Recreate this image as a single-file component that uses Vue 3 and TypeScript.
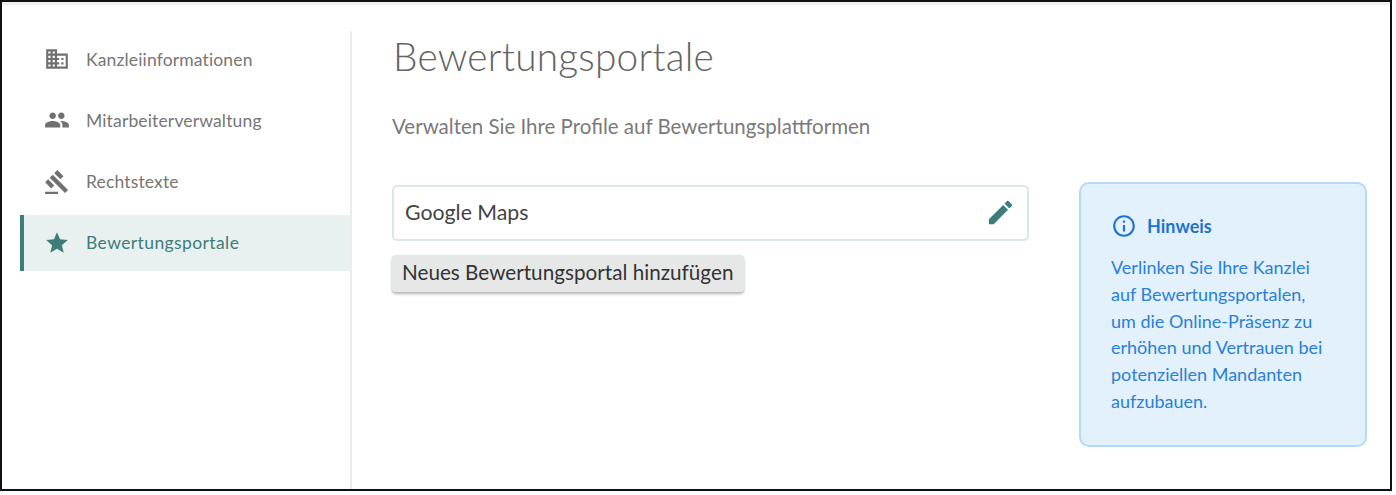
<script setup lang="ts">
interface NavItem {
  label: string
  path: string
  active?: boolean
}

const items: NavItem[] = [
  {
    label: 'Kanzleiinformationen',
    path: 'M12 7V3H2v18h20V7H12zM6 19H4v-2h2v2zm0-4H4v-2h2v2zm0-4H4V9h2v2zm0-4H4V5h2v2zm4 12H8v-2h2v2zm0-4H8v-2h2v2zm0-4H8V9h2v2zm0-4H8V5h2v2zm10 12h-8v-2h2v-2h-2v-2h2v-2h-2V9h8v10zm-2-8h-2v2h2v-2zm0 4h-2v2h2v-2z'
  },
  {
    label: 'Mitarbeiterverwaltung',
    path: 'M16 11c1.66 0 2.99-1.34 2.99-3S17.66 5 16 5c-1.66 0-3 1.34-3 3s1.34 3 3 3zm-8 0c1.66 0 2.99-1.34 2.99-3S9.66 5 8 5C6.34 5 5 6.34 5 8s1.34 3 3 3zm0 2c-2.33 0-7 1.17-7 3.5V19h14v-2.5c0-2.33-4.67-3.5-7-3.5zm8 0c-.29 0-.62.02-.97.05 1.16.84 1.97 1.97 1.97 3.45V19h6v-2.5c0-2.33-4.67-3.5-7-3.5z'
  },
  {
    label: 'Rechtstexte',
    path: 'M1 21h12v2H1zM5.245 8.07l2.83-2.827 14.14 14.142-2.828 2.828zM12.317 1l5.657 5.656-2.83 2.83-5.654-5.66zM3.825 9.485l5.657 5.657-2.828 2.828-5.657-5.657z'
  },
  {
    label: 'Bewertungsportale',
    path: 'M12 17.27L18.18 21l-1.64-7.03L22 9.24l-7.19-.61L12 2 9.19 8.63 2 9.24l5.46 4.73L5.82 21z',
    active: true
  }
]

const hintLines: string[] = [
  'Verlinken Sie Ihre Kanzlei',
  'auf Bewertungsportalen,',
  'um die Online-Präsenz zu',
  'erhöhen und Vertrauen bei',
  'potenziellen Mandanten',
  'aufzubauen.'
]
</script>

<template>
  <div class="frame">
    <aside class="sidebar">
      <div
        v-for="item in items"
        :key="item.label"
        class="nav-item"
        :class="{ active: item.active }"
      >
        <svg class="nav-icon" viewBox="0 0 24 24"><path :d="item.path" /></svg>
        <span>{{ item.label }}</span>
      </div>
    </aside>
    <main class="content">
      <h1>Bewertungsportale</h1>
      <p class="subtitle">Verwalten Sie Ihre Profile auf Bewertungsplattformen</p>
      <div class="columns">
        <div class="list">
          <div class="portal">
            <span>Google Maps</span>
            <svg class="edit" viewBox="0 0 24 24">
              <path d="M3 17.25V21h3.75L17.81 9.94l-3.75-3.75L3 17.25zM20.71 7.04c.39-.39.39-1.02 0-1.41l-2.34-2.34c-.39-.39-1.02-.39-1.41 0l-1.83 1.83 3.75 3.75 1.83-1.83z" />
            </svg>
          </div>
          <button class="add" type="button">Neues Bewertungsportal hinzufügen</button>
        </div>
        <section class="hint">
          <div class="hint-head">
            <svg class="info" viewBox="0 0 24 24">
              <path d="M11 7h2v2h-2zm0 4h2v6h-2zm1-9C6.48 2 2 6.48 2 12s4.48 10 10 10 10-4.48 10-10S17.52 2 12 2zm0 18c-4.41 0-8-3.59-8-8s3.59-8 8-8 8 3.59 8 8-3.59 8-8 8z" />
            </svg>
            <strong>Hinweis</strong>
          </div>
          <p v-for="line in hintLines" :key="line">{{ line }}</p>
        </section>
      </div>
    </main>
  </div>
</template>

<style>
html, body {
  margin: 0;
  background: #fff;
}
</style>

<style scoped>
.frame {
  box-sizing: border-box;
  width: 1392px;
  height: 491px;
  border: 2px solid #111;
  background: #fff;
  box-shadow: inset 0 3px 0 #f1f1f1, 0 1px 0 #bbb;
  display: flex;
  font-family: Lato, "Noto Sans", sans-serif;
  overflow: hidden;
}
.sidebar {
  box-sizing: border-box;
  width: 332px;
  margin-left: 18px;
  margin-top: 29px;
  border-right: 2px solid #ececec;
  flex: none;
}
.nav-item {
  height: 56px;
  margin-bottom: 5.3px;
  display: flex;
  align-items: center;
  padding-left: 4px;
  gap: 16px;
  color: #767676;
  font-size: 17.5px;
  letter-spacing: 0.15px;
}
.nav-icon {
  width: 26px;
  height: 26px;
  margin-left: 20px;
  fill: #707070;
  flex: none;
}
.nav-item.active {
  padding-left: 0;
  border-left: 4px solid #3d7d7a;
  background: #e9f0f0;
  color: #3d7d7a;
  letter-spacing: 0.4px;
}
.nav-item.active .nav-icon {
  fill: #3d7d7a;
}
.content {
  flex: 1;
  padding: 28px 0 0 40px;
  min-width: 0;
}
h1 {
  margin: 0 0 0 1px;
  font-size: 38.8px;
  line-height: 52px;
  font-weight: 300;
  letter-spacing: 0.2px;
  color: #636363;
}
.subtitle {
  margin: 32px 0 0;
  font-size: 20.5px;
  line-height: 24px;
  color: #7a7a7a;
}
.columns {
  display: flex;
  align-items: flex-start;
  margin-top: 44px;
}
.list {
  width: 637px;
  margin-top: 3px;
}
.portal {
  box-sizing: border-box;
  height: 56px;
  border: 2px solid #dbe8e7;
  border-radius: 5px;
  display: flex;
  align-items: center;
  justify-content: space-between;
  padding: 0 12px 3px 11px;
  font-size: 21.3px;
  color: #444;
}
.edit {
  width: 31px;
  height: 31px;
  margin-right: -1px;
  margin-top: 1px;
  fill: #3d7d7a;
}
.add {
  display: block;
  box-sizing: border-box;
  width: 352px;
  height: 37px;
  margin-top: 14px;
  padding: 0 10px 3px;
  border: 0;
  border-radius: 4px;
  background: #e6e8e8;
  box-shadow: 0 2px 3px rgba(0, 0, 0, 0.3);
  font-family: inherit;
  font-size: 20.7px;
  text-align: left;
  white-space: nowrap;
  color: #333;
}
.hint {
  box-sizing: border-box;
  width: 288px;
  height: 265px;
  margin-left: 50px;
  padding: 27px 30px 0;
  border: 2px solid #b3dafb;
  border-radius: 10px;
  background: #e3f1fc;
  color: #2a7fd8;
}
.hint-head {
  display: flex;
  align-items: center;
  gap: 10px;
  height: 30px;
  margin-bottom: 13px;
  color: #1f73d0;
  font-size: 18px;
}
.info {
  width: 26px;
  height: 26px;
  fill: #1f73d0;
  flex: none;
}
.hint p {
  margin: 0;
  font-size: 18px;
  line-height: 26.8px;
  white-space: nowrap;
}
</style>
